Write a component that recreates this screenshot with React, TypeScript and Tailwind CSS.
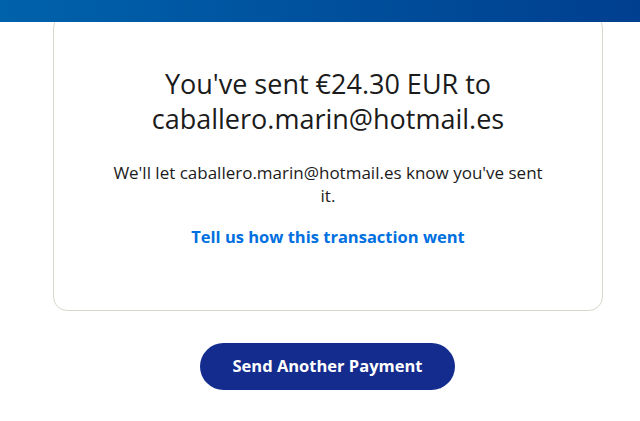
export default function App() {
  return (
    <div className="min-h-[421px] bg-white font-['Open_Sans',sans-serif] text-[#1b1b1b]">
      <div className="relative z-10 h-[22px] bg-gradient-to-r from-[#0062ab] to-[#003f8f]" />
      <div className="-mt-[8px] ml-[53px] w-[550px] rounded-[14px] border border-[#d9d6cc] bg-white px-[40px] pb-[61px] pt-[51px] text-center">
        <h1 className="text-[27px] leading-[35px] font-normal">
          You've sent €24.30 EUR to
          <br />
          caballero.marin@hotmail.es
        </h1>
        <p className="mx-auto mt-[25px] w-[445px] text-[17px] leading-[23px]">
          We'll let caballero.marin@hotmail.es know you've sent it.
        </p>
        <a href="#" className="mt-[18px] inline-block text-[16.5px] font-bold leading-[23px] text-[#0070e0]">
          Tell us how this transaction went
        </a>
      </div>
      <div className="mt-[32px] flex justify-center pl-[15px]">
        <button className="h-[47px] w-[255px] rounded-full bg-[#142c8e] text-[16.5px] font-bold text-white">
          Send Another Payment
        </button>
      </div>
    </div>
  )
}
